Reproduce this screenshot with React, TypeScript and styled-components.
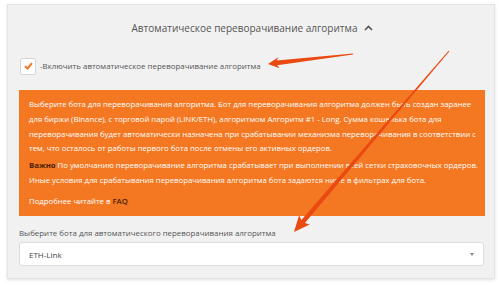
import styled, { createGlobalStyle } from "styled-components";

const GlobalStyle = createGlobalStyle`
  html, body {
    margin: 0;
    padding: 0;
    background: #fff;
    font-family: "Open Sans", "DejaVu Sans", sans-serif;
  }
`;

const Page = styled.div`
  position: relative;
  width: 500px;
  height: 285px;
  padding: 4px 0 0 7px;
  box-sizing: border-box;
`;

const Card = styled.div`
  width: 488px;
  height: 275px;
  box-sizing: border-box;
  background: #f1f1f1;
  border: 1px solid #e4e4e4;
  box-shadow: 0 1px 3px rgba(0, 0, 0, 0.12);
  padding: 0 10px 0 11px;
`;

const Header = styled.div`
  height: 46px;
  display: flex;
  align-items: center;
  justify-content: center;
  gap: 7px;
  font-size: 10px;
  color: #555;
  padding-left: 2px;
`;

const CheckRow = styled.label`
  display: flex;
  align-items: center;
  gap: 4px;
  height: 30px;
  padding-left: 1px;
  font-size: 7.9px;
  color: #555;
`;

const Box = styled.span`
  width: 14px;
  height: 15px;
  background: #fff;
  border: 1px solid #d6d6d6;
  border-radius: 2px;
  display: flex;
  align-items: center;
  justify-content: center;
`;

const Notice = styled.div`
  margin-top: 9px;
  width: 466px;
  height: 126px;
  box-sizing: border-box;
  background: #f47721;
  color: #fff;
  font-size: 7.75px;
  line-height: 14.8px;
  padding: 7px 10px 0 10px;
  white-space: nowrap;
`;

const Para = styled.p<{ $gap: number }>`
  margin: 0 0 ${(p) => p.$gap}px 0;
`;

const Strong = styled.b`
  font-weight: 700;
  color: #4a2108;
`;

const Link = styled.span`
  color: #4a2108;
  font-weight: 600;
`;

const FieldLabel = styled.div`
  margin-top: 8px;
  font-size: 7.9px;
  color: #555;
  height: 18px;
  line-height: 18px;
`;

const Select = styled.div`
  width: 465px;
  height: 24px;
  box-sizing: border-box;
  background: #fff;
  border: 1px solid #dcdcdc;
  border-radius: 3px;
  display: flex;
  align-items: center;
  justify-content: space-between;
  padding: 0 9px 0 9px;
  font-size: 8px;
  color: #444;
`;

const Caret = styled.span`
  width: 0;
  height: 0;
  border-left: 2.5px solid transparent;
  border-right: 2.5px solid transparent;
  border-top: 3px solid #888;
`;

const Overlay = styled.svg`
  position: absolute;
  left: 0;
  top: 0;
  pointer-events: none;
`;

// tapered arrow polygon from tail to tip
function arrow(tx: number, ty: number, px: number, py: number, w0: number, w1: number, hl: number, hw: number) {
  const len = Math.hypot(px - tx, py - ty);
  const dx = (px - tx) / len;
  const dy = (py - ty) / len;
  const nx = -dy;
  const ny = dx;
  const bx = px - dx * hl;
  const by = py - dy * hl;
  const pts = [
    [tx + nx * w0, ty + ny * w0],
    [bx + nx * w1, by + ny * w1],
    [bx + nx * hw - dx * 2, by + ny * hw - dy * 2],
    [px, py],
    [bx - nx * hw - dx * 2, by - ny * hw - dy * 2],
    [bx - nx * w1, by - ny * w1],
    [tx - nx * w0, ty - ny * w0],
  ];
  return pts.map((p) => p.map((v) => v.toFixed(1)).join(",")).join(" ");
}

export default function App() {
  return (
    <Page>
      <GlobalStyle />
      <Card>
        <Header>
          Автоматическое переворачивание алгоритма
          <svg width="9" height="6" viewBox="0 0 9 6">
            <path d="M1 5 L4.5 1.5 L8 5" fill="none" stroke="#555" strokeWidth="1.6" />
          </svg>
        </Header>
        <CheckRow>
          <Box>
            <svg width="9" height="8" viewBox="0 0 9 8">
              <path d="M1 4.2 L3.5 6.5 L8 1.2" fill="none" stroke="#f47721" strokeWidth="2" />
            </svg>
          </Box>
          -Включить автоматическое переворачивание алгоритма
        </CheckRow>
        <Notice>
          <Para $gap={2}>
            Выберите бота для переворачивания алгоритма. Бот для переворачивания алгоритма должен быть создан заранее
            <br />
            для биржи (Binance), с торговой парой (LINK/ETH), алгоритмом Алгоритм #1 - Long. Сумма кошелька бота для
            <br />
            переворачивания будет автоматически назначена при срабатывании механизма переворачивания в соответствии с
            <br />
            тем, что осталось от работы первого бота после отмены его активных ордеров.
          </Para>
          <Para $gap={6}>
            <Strong>Важно</Strong> По умолчанию переворачивание алгоритма срабатывает при выполнении всей сетки страховочных ордеров.
            <br />
            Иные условия для срабатывания переворачивания алгоритма бота задаются ниже в фильтрах для бота.
          </Para>
          <Para $gap={0}>
            Подробнее читайте в <Link>FAQ</Link>
          </Para>
        </Notice>
        <FieldLabel>Выберите бота для автоматического переворачивания алгоритма</FieldLabel>
        <Select>
          ETH-Link
          <Caret />
        </Select>
      </Card>
      <Overlay width="500" height="285" viewBox="0 0 500 285">
        <polygon points={arrow(353, 54, 268, 64, 0.6, 2.4, 9, 5.5)} fill="#ea4a12" />
        <polygon points={arrow(449, 51, 294, 232, 0.5, 2.3, 14, 7)} fill="#ea4a12" />
      </Overlay>
    </Page>
  );
}
